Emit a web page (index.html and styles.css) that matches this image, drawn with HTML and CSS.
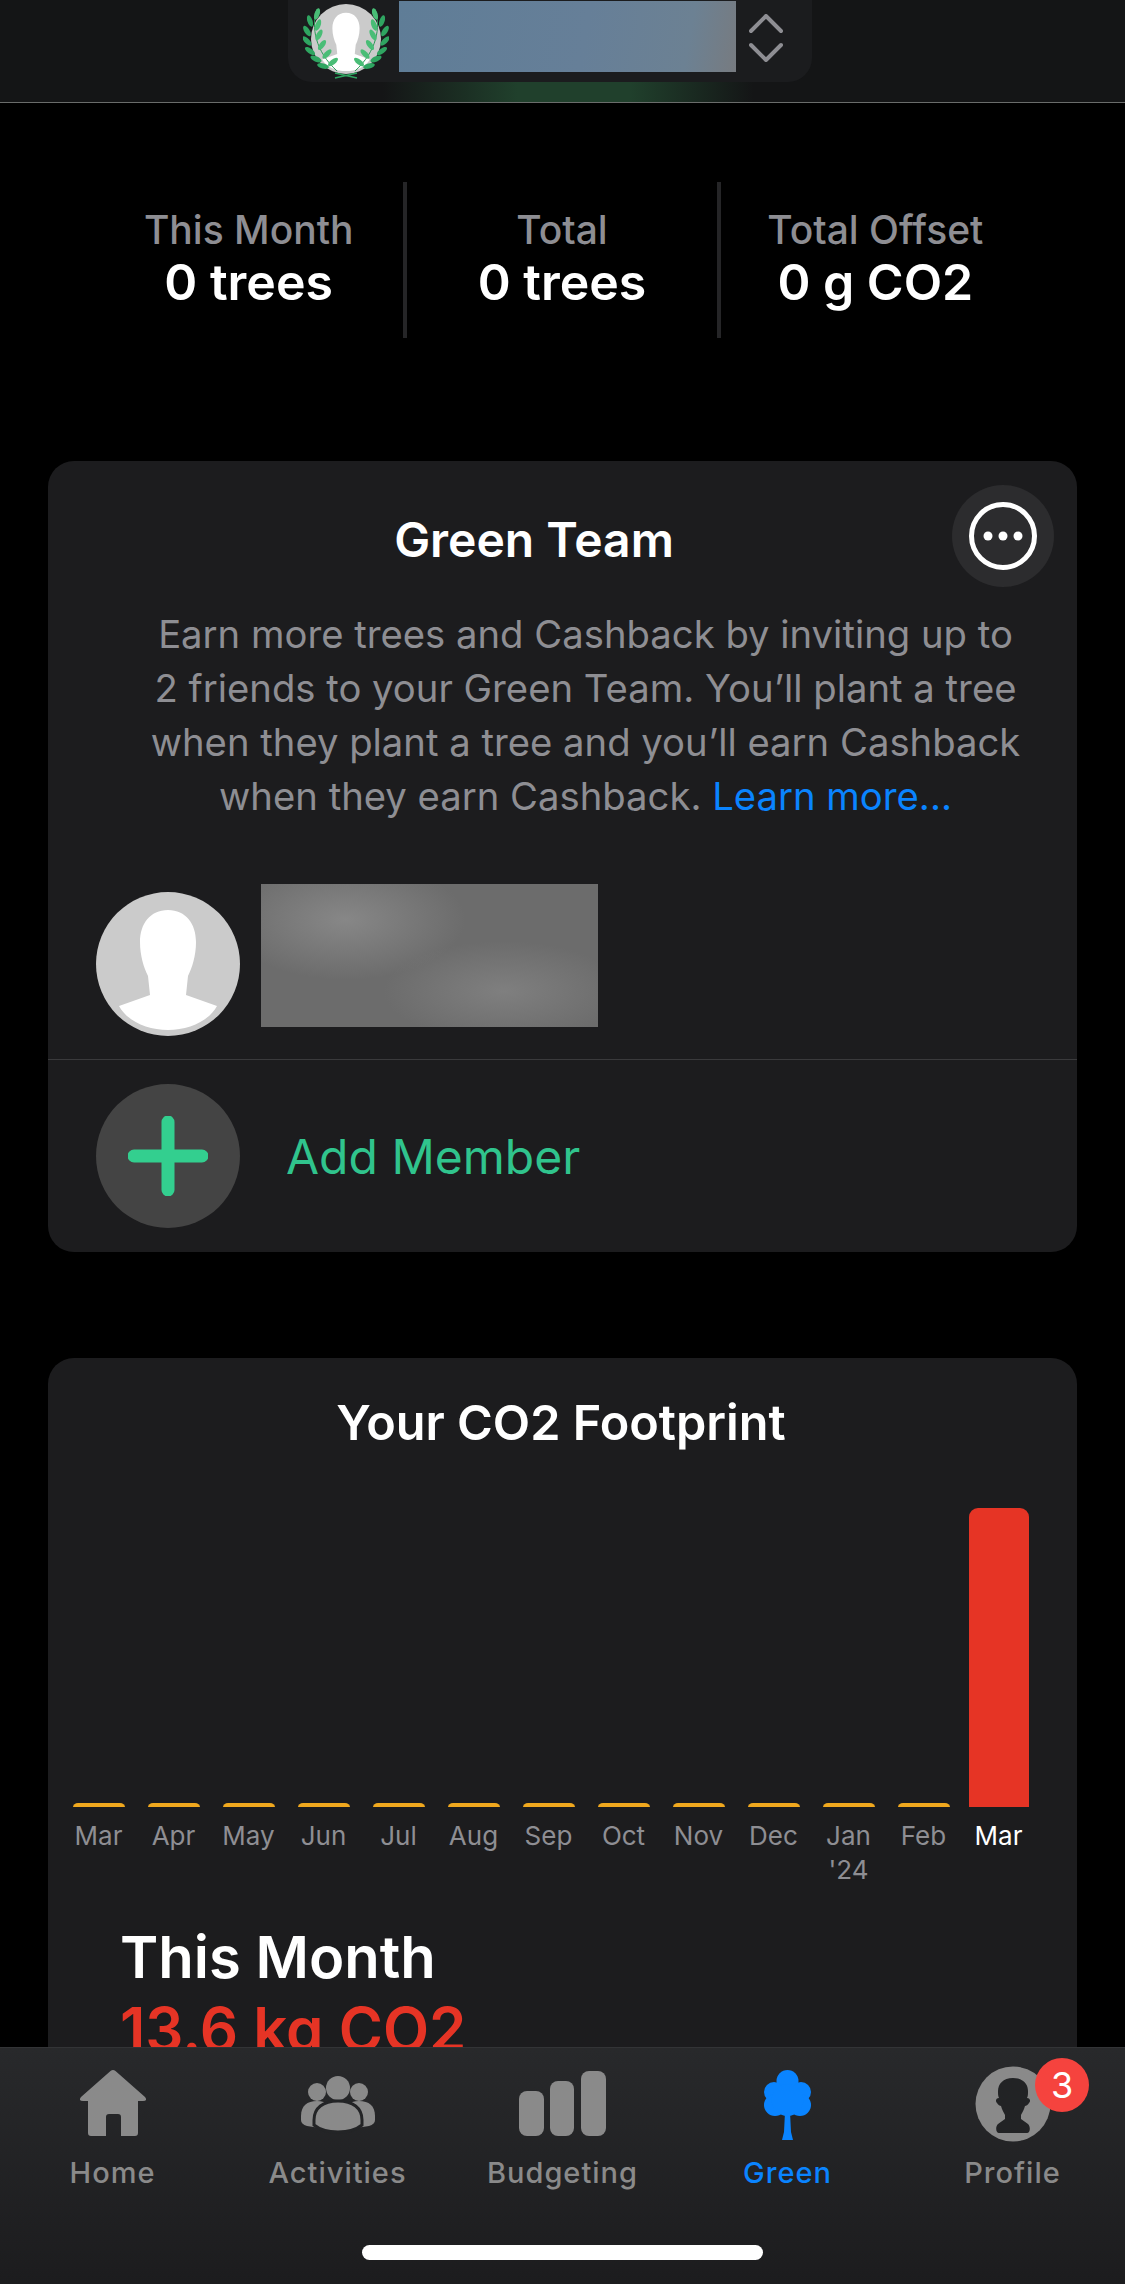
FILE: index.html
```html
<!DOCTYPE html>
<html lang="en">
    <head>
        <meta charset="UTF-8">
        <meta name="viewport" content="width=device-width, initial-scale=1.0">
        <title>Green</title>
        <link rel="stylesheet" href="styles.css">
    </head>

    <body>

        <svg class="defs" width="0" height="0">
            <symbol id="person" viewBox="-72 -72 144 144">
                <circle r="72" fill="#cbcbcb"/>
                <path fill="#fff" d="M0-54C-18-54-28-40-28-22C-28-8-24 4-20 12L-18 31L-49 42C-40 58-20 66 0 66C20 66 40 58 49 42L18 31L20 12C24 4 28-8 28-22C28-40 18-54 0-54Z"/>
            </symbol>
            <g id="laurel">
                <path d="M14 8C8 26 12 50 34 70" fill="none" stroke="#2b9a58" stroke-width="1"/>
                <g fill="#2fa561">
                    <ellipse rx="6" ry="2.6" transform="translate(7 20) rotate(72)"/>
                    <ellipse rx="6" ry="2.6" transform="translate(4 30) rotate(58)"/>
                    <ellipse rx="6" ry="2.6" transform="translate(4 40) rotate(46)"/>
                    <ellipse rx="6" ry="2.6" transform="translate(7 50) rotate(36)"/>
                    <ellipse rx="6" ry="2.6" transform="translate(13 58) rotate(24)"/>
                    <ellipse rx="6" ry="2.6" transform="translate(20 65) rotate(14)"/>
                </g>
                <g fill="#49bd76">
                    <ellipse rx="6" ry="2.6" transform="translate(14 13) rotate(-72)"/>
                    <ellipse rx="6" ry="2.6" transform="translate(15 24) rotate(-70)"/>
                    <ellipse rx="6" ry="2.6" transform="translate(16 34) rotate(-62)"/>
                    <ellipse rx="6" ry="2.6" transform="translate(19 44) rotate(-54)"/>
                    <ellipse rx="6" ry="2.6" transform="translate(24 53) rotate(-46)"/>
                    <ellipse rx="6" ry="2.6" transform="translate(30 61) rotate(-38)"/>
                </g>
            </g>
        </svg>

        <header class="topbar">
            <div class="account">
                <svg class="wreath" viewBox="0 0 86 80" width="86" height="80">
                    <use href="#person" x="8" y="3" width="70" height="70"/>
                    <use href="#laurel"/>
                    <use href="#laurel" transform="translate(86 0) scale(-1 1)"/>
                    <path d="M32 72L54 77M54 72L32 77" stroke="#2fa561" stroke-width="1.5"/>
                </svg>
                <div class="account-blur"></div>
                <svg class="chevrons" viewBox="0 0 34 48" width="34" height="48">
                    <path d="M2 17L17 2L32 17M2 31L17 46L32 31" fill="none" stroke="#8e8e93" stroke-width="4" stroke-linecap="round" stroke-linejoin="round"/>
                </svg>
            </div>
        </header>

        <main class="content">

            <section class="stats">
                <div class="stat">
                    <div class="stat-label">This Month</div>
                    <div class="stat-value">0 trees</div>
                </div>
                <div class="stat">
                    <div class="stat-label">Total</div>
                    <div class="stat-value">0 trees</div>
                </div>
                <div class="stat">
                    <div class="stat-label">Total Offset</div>
                    <div class="stat-value">0 g CO2</div>
                </div>
            </section>

            <!-- Green Team -->
            <section class="card team">
                <h2 class="team-title">Green Team</h2>
                <button class="more-btn" type="button" aria-label="More">
                    <svg viewBox="0 0 70 70" width="70" height="70">
                        <circle cx="35" cy="35" r="31.5" fill="none" stroke="#fff" stroke-width="5"/>
                        <circle cx="20" cy="35" r="4.5" fill="#fff"/>
                        <circle cx="35" cy="35" r="4.5" fill="#fff"/>
                        <circle cx="50" cy="35" r="4.5" fill="#fff"/>
                    </svg>
                </button>
                <p class="team-text">Earn more trees and Cashback by inviting up to<br>2 friends to your Green Team. You’ll plant a tree<br>when they plant a tree and you’ll earn Cashback<br>when they earn Cashback. <a class="learn-more" href="#">Learn more...</a></p>
                <div class="member">
                    <svg class="member-pic" width="144" height="144"><use href="#person"/></svg>
                    <div class="member-blur"></div>
                </div>
                <div class="add-member">
                    <span class="add-circle">
                        <svg viewBox="0 0 80 80" width="80" height="80">
                            <path d="M40 6V74M6 40H74" stroke="#33cf8f" stroke-width="13" stroke-linecap="round"/>
                        </svg>
                    </span>
                    <span class="add-label">Add Member</span>
                </div>
            </section>

            <!-- CO2 -->
            <section class="card footprint">
                <h2 class="footprint-title">Your CO2 Footprint</h2>
                <div class="chart">
                    <div class="col"><div class="bar-area"><div class="bar"></div></div><div class="month">Mar</div></div>
                    <div class="col"><div class="bar-area"><div class="bar"></div></div><div class="month">Apr</div></div>
                    <div class="col"><div class="bar-area"><div class="bar"></div></div><div class="month">May</div></div>
                    <div class="col"><div class="bar-area"><div class="bar"></div></div><div class="month">Jun</div></div>
                    <div class="col"><div class="bar-area"><div class="bar"></div></div><div class="month">Jul</div></div>
                    <div class="col"><div class="bar-area"><div class="bar"></div></div><div class="month">Aug</div></div>
                    <div class="col"><div class="bar-area"><div class="bar"></div></div><div class="month">Sep</div></div>
                    <div class="col"><div class="bar-area"><div class="bar"></div></div><div class="month">Oct</div></div>
                    <div class="col"><div class="bar-area"><div class="bar"></div></div><div class="month">Nov</div></div>
                    <div class="col"><div class="bar-area"><div class="bar"></div></div><div class="month">Dec</div></div>
                    <div class="col"><div class="bar-area"><div class="bar"></div></div><div class="month">Jan<br>'24</div></div>
                    <div class="col"><div class="bar-area"><div class="bar"></div></div><div class="month">Feb</div></div>
                    <div class="col"><div class="bar-area"><div class="bar bar-now"></div></div><div class="month month-now">Mar</div></div>
                </div>
                <div class="month-title">This Month</div>
                <div class="month-amount">13.6 kg CO2</div>
            </section>

        </main>

        <nav class="tabbar">
            <div class="tabs">
                <a class="tab" href="#">
                    <svg viewBox="0 0 66 66" width="66" height="66">
                        <path fill="#8a8a8a" d="M30.5 1Q33-1 35.5 1L65 27Q68 31 63 31H58V63Q58 66 55 66H41V47Q41 44 38 44H29Q26 44 26 47V66H11Q8 66 8 63V31H3Q-2 31 1 27Z"/>
                    </svg>
                    <span>Home</span>
                </a>
                <a class="tab" href="#">
                    <svg viewBox="0 0 74 66" width="74" height="66">
                        <g fill="#8a8a8a">
                            <circle cx="16" cy="22" r="9"/>
                            <circle cx="58" cy="22" r="9"/>
                            <path d="M0 46C0 36 6 31 16 31C26 31 32 36 32 46V60L6 56Q0 54 0 50Z"/>
                            <path d="M74 46C74 36 68 31 58 31C48 31 42 36 42 46V60L68 56Q74 54 74 50Z"/>
                            <circle cx="37" cy="18" r="12"/>
                            <path stroke="#232426" stroke-width="3" d="M13 50C13 38 22 31 37 31C52 31 61 38 61 50V55C55 60 46 62 37 62C28 62 19 60 13 55Z"/>
                        </g>
                    </svg>
                    <span>Activities</span>
                </a>
                <a class="tab" href="#">
                    <svg viewBox="0 0 87 66" width="87" height="66">
                        <g fill="#8a8a8a">
                            <rect x="0" y="21" width="25" height="45" rx="8"/>
                            <rect x="31" y="11" width="24" height="55" rx="8"/>
                            <rect x="62" y="1" width="25" height="65" rx="8"/>
                        </g>
                    </svg>
                    <span>Budgeting</span>
                </a>
                <a class="tab tab-active" href="#">
                    <svg viewBox="0 0 47 70" width="47" height="70">
                        <g fill="#0a84ff">
                            <circle cx="23.5" cy="11" r="11"/>
                            <circle cx="10" cy="22" r="10"/>
                            <circle cx="37" cy="22" r="10"/>
                            <circle cx="11" cy="35" r="11"/>
                            <circle cx="36" cy="35" r="11"/>
                            <circle cx="23.5" cy="30" r="16"/>
                            <path d="M21 42H26L27 62L29 70H18L20 62Z"/>
                        </g>
                    </svg>
                    <span>Green</span>
                </a>
                <a class="tab tab-profile" href="#">
                    <svg viewBox="-38 -38 76 76" width="76" height="76">
                        <circle r="37.5" fill="#8a8a8a"/>
                        <path fill="#222325" d="M0-26C-10-26-15-20-15-13C-15-10-15-8-14-6C-17-6-18-3-16-1C-15 1-13 2-12 2C-11 6-9 9-8 11V15L-15 20C-18 23-17 29-14 29H14C17 29 18 23 15 20L8 15V11C9 9 11 6 12 2C13 2 15 1 16-1C18-3 17-6 14-6C15-8 15-10 15-13C15-20 10-26 0-26Z"/>
                    </svg>
                    <span>Profile</span>
                    <b class="badge">3</b>
                </a>
            </div>
            <div class="home-indicator"></div>
        </nav>

    </body>
</html>
```

FILE: styles.css
```css
* {
    box-sizing: border-box;
}
html, body {
    margin: 0;
    height: 2284px;
    overflow: hidden;
}
body {
    display: flex;
    flex-direction: column;
    font-family: Inter, "Liberation Sans", sans-serif;
    background-color: #000;
    color: #fff;
}
.defs {
    position: absolute;
}
a {
    text-decoration: none;
}

/* top */
.topbar {
    flex: none;
    height: 103px;
    display: flex;
    justify-content: center;
    border-bottom: 1px solid #6a6c6b;
    background: linear-gradient(90deg, #141516 34%, #20402c 46%, #20402c 56%, #141516 67%);
    padding-right: 25px;
}
.account {
    width: 524px;
    height: 82px;
    padding-left: 15px;
    display: flex;
    align-items: flex-start;
    background-color: #1b1c1e;
    border-radius: 0 0 24px 24px;
}
.wreath {
    flex: none;
    margin-top: 1px;
}
.account-blur {
    width: 337px;
    height: 71px;
    margin: 1px 0 0 10px;
    background: linear-gradient(100deg, #5f7d97 0%, #667f98 55%, #6c8193 85%, #777b80 100%);
}
.chevrons {
    margin: 14px 0 0 13px;
}

/* content */
.content {
    flex: 1;
    min-height: 0;
    overflow: hidden;
}
.stats {
    width: 936px;
    height: 156px;
    margin: 79px 0 0 94px;
    display: flex;
}
.stat {
    flex: 1;
    display: flex;
    flex-direction: column;
    align-items: center;
    padding-top: 26px;
}
.stat + .stat {
    border-left: 4px solid #252527;
}
.stat-label {
    font-size: 39px;
    line-height: 44px;
    font-weight: 500;
    color: #8e8e93;
}
.stat-value {
    font-size: 50px;
    line-height: 60px;
    font-weight: 600;
}
.card {
    position: relative;
    width: 1029px;
    margin-left: 48px;
    background-color: #1c1c1e;
    border-radius: 26px;
}
.team {
    margin-top: 123px;
    height: 791px;
}
.team-title {
    margin: 0;
    padding: 50px 57px 0 0;
    text-align: center;
    font-size: 48px;
    line-height: 58px;
    font-weight: 600;
}
.more-btn {
    position: absolute;
    top: 24px;
    right: 23px;
    width: 102px;
    height: 102px;
    padding: 0;
    border: none;
    border-radius: 50%;
    background-color: #2c2c2e;
    display: flex;
    align-items: center;
    justify-content: center;
}
.team-text {
    margin: 38px 0 0 46px;
    text-align: center;
    font-size: 38.25px;
    line-height: 54px;
    color: #8e8e93;
}
.learn-more {
    color: #0a84ff;
}
.member {
    height: 176px;
    margin-top: 61px;
    display: flex;
    padding-left: 48px;
    border-bottom: 1px solid #3a3a3c;
}
.member-pic {
    margin-top: 8px;
}
.member-blur {
    width: 337px;
    height: 143px;
    margin-left: 21px;
    background: radial-gradient(ellipse 120px 60px at 25% 25%, #878787, transparent), radial-gradient(ellipse 120px 50px at 72% 75%, #7f7f7f, transparent), #6c6c6c;
}
.add-member {
    display: flex;
    align-items: center;
    padding: 24px 0 0 48px;
}
.add-circle {
    width: 144px;
    height: 144px;
    border-radius: 50%;
    background-color: #444;
    display: flex;
    align-items: center;
    justify-content: center;
}
.add-label {
    margin-left: 46px;
    font-size: 48px;
    color: #30c48d;
}

/* chart */
.footprint {
    margin-top: 106px;
    height: 900px;
}
.footprint-title {
    margin: 0;
    padding: 36px 3px 0 0;
    text-align: center;
    font-size: 48.6px;
    line-height: 58px;
    font-weight: 600;
}
.chart {
    margin-left: 13px;
    padding-top: 56px;
    display: grid;
    grid-template-columns: repeat(13, 75px);
}
.col {
    display: flex;
    flex-direction: column;
    align-items: center;
}
.bar-area {
    height: 299px;
    display: flex;
    align-items: flex-end;
}
.bar {
    width: 52px;
    height: 4px;
    background-color: #f0a81e;
    border-radius: 5px 5px 0 0 / 4px 4px 0 0;
}
.bar-now {
    width: 60px;
    height: 299px;
    background-color: #e63425;
    border-radius: 9px 9px 0 0;
}
.month {
    margin-top: 12px;
    text-align: center;
    font-size: 26px;
    line-height: 34px;
    color: #8e8e93;
}
.month-now {
    color: #fff;
}
.month-title {
    margin: 35px 0 0 72px;
    font-size: 58px;
    line-height: 71px;
    font-weight: 600;
}
.month-amount {
    margin-left: 72px;
    font-size: 60px;
    line-height: 72px;
    font-weight: 600;
    color: #e63425;
}

/* tabs */
.tabbar {
    position: fixed;
    left: 0;
    right: 0;
    bottom: 0;
    height: 237px;
    border-top: 1px solid #333436;
    background: linear-gradient(#28292b, #1c1c1e);
}
.tabs {
    display: flex;
    height: 197px;
}
.tab {
    position: relative;
    flex: 1;
    height: 124px;
    margin-top: 18px;
    display: flex;
    flex-direction: column;
    align-items: center;
    justify-content: space-between;
    font-size: 29px;
    font-weight: 500;
    letter-spacing: 1px;
    color: #8a8a8a;
}
.tab svg {
    display: block;
    margin-top: 4px;
}
.tab-profile svg {
    margin-top: 0;
}
.tab-active {
    color: #0a84ff;
}
.badge {
    position: absolute;
    top: -8px;
    left: 135px;
    width: 54px;
    height: 54px;
    border-radius: 50%;
    background-color: #f5433e;
    color: #fff;
    font-size: 36px;
    font-weight: 400;
    line-height: 54px;
    text-align: center;
    letter-spacing: 0;
}
.home-indicator {
    width: 401px;
    height: 15px;
    margin: 0 auto;
    background-color: #fff;
    border-radius: 8px;
}
```
